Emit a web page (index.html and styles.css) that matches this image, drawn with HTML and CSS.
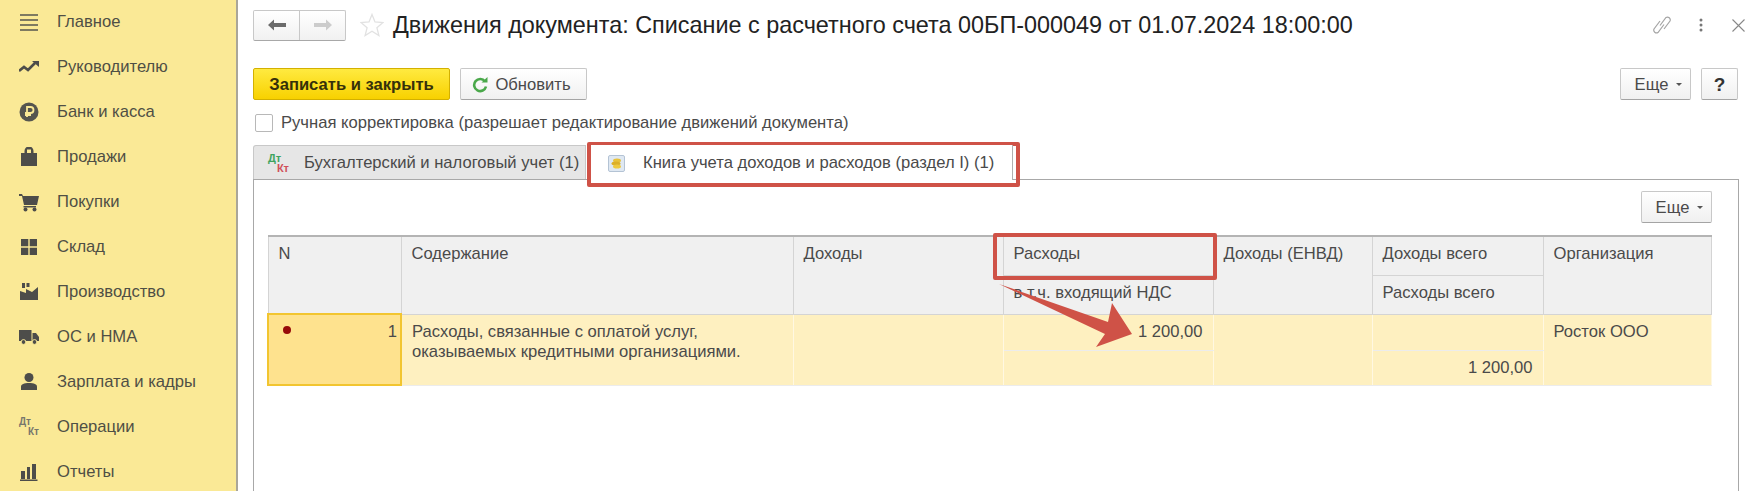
FILE: index.html
```html
<!DOCTYPE html>
<html>

<head>
    <title>Движения документа</title>
    <meta charset="utf-8">
    <link rel="stylesheet" href="styles.css">
</head>

<body>
<div class="sidebar">
    <div class="nav-item">
        <svg class="nav-icon" viewBox="0 0 20 20"><path d="M1 3h18M1 8h18M1 13h18M1 18h18" stroke="#55554f" stroke-width="1.6"/></svg>
        Главное
    </div>
    <div class="nav-item">
        <svg class="nav-icon" viewBox="0 0 20 20"><path d="M0 14l5-4 4 3 7-7" fill="none" stroke="#4d4d4a" stroke-width="2.6"/><path d="M13 4h7v6z" fill="#4d4d4a"/></svg>
        Руководителю
    </div>
    <div class="nav-item">
        <svg class="nav-icon" viewBox="0 0 20 20"><circle cx="10" cy="10" r="9.5" fill="#55554f"/><path d="M8 15V5h3.500a3 3 0 0 1 0 6H6M6 13h6" fill="none" stroke="#fae996" stroke-width="1.8"/></svg>
        Банк и касса
    </div>
    <div class="nav-item">
        <svg class="nav-icon" viewBox="0 0 20 20"><path d="M2 6h3.500V4a4.500 4.500 0 0 1 9 0v2H18v13H2z" fill="#4d4d4a"/><path d="M8 2.500h4V6H8z" fill="#fae996"/></svg>
        Продажи
    </div>
    <div class="nav-item">
        <svg class="nav-icon" viewBox="0 0 20 20"><path d="M0 2h3l1 2h16l-2 9H5L3 4H0z" fill="#4d4d4a"/><path d="M4.500 14H17v1.500H4.500z" fill="#4d4d4a"/><circle cx="6.500" cy="17.500" r="2" fill="#4d4d4a"/><circle cx="15.500" cy="17.500" r="2" fill="#4d4d4a"/></svg>
        Покупки
    </div>
    <div class="nav-item">
        <svg class="nav-icon" viewBox="0 0 20 20"><path d="M2 2h7.300v7.300H2zM10.700 2H18v7.300h-7.300zM2 10.700h7.300V18H2zM10.700 10.700H18V18h-7.300z" fill="#4d4d4a"/></svg>
        Склад
    </div>
    <div class="nav-item">
        <svg class="nav-icon" viewBox="0 0 20 20"><path d="M1 18V9l6 2V7l6 3 6-5v13z" fill="#4d4d4a"/><path d="M3 1h3v5H3zM7.500 1h3v4h-3z" fill="#4d4d4a"/></svg>
        Производство
    </div>
    <div class="nav-item">
        <svg class="nav-icon" viewBox="0 0 20 20"><path d="M0 3h12.500v11H0zM13.500 6h3.500l3 4v4h-6.500z" fill="#4d4d4a"/><circle cx="4.500" cy="15" r="2.400" fill="#4d4d4a" stroke="#fae996"/><circle cx="15.500" cy="15" r="2.400" fill="#4d4d4a" stroke="#fae996"/></svg>
        ОС и НМА
    </div>
    <div class="nav-item">
        <svg class="nav-icon" viewBox="0 0 20 20"><circle cx="10" cy="5.500" r="4.500" fill="#4d4d4a"/><path d="M2 18v-3.500c0-2 3-3.500 8-3.500s8 1.500 8 3.500V18z" fill="#4d4d4a"/></svg>
        Зарплата и кадры
    </div>
    <div class="nav-item">
        <span class="debit-credit nav-icon"><span>Дт</span><span class="credit">Кт</span></span>
        Операции
    </div>
    <div class="nav-item">
        <svg class="nav-icon" viewBox="0 0 20 20"><path d="M2 9h4v8H2zM8 5h3v12H8zM13 2h4v15h-4zM1 17.500h17.500V19H1z" fill="#4d4d4a"/></svg>
        Отчеты
    </div>
</div>

<div class="main">
    <div class="header">
        <div class="nav-buttons">
            <div class="nav-button">
                <svg width="18" height="12" viewBox="0 0 18 12"><path d="M0 6l6-5.500v3.500h12v4H6v3.500z" fill="#6b6b6b"/></svg>
            </div>
            <div class="nav-button">
                <svg width="18" height="12" viewBox="0 0 18 12"><path d="M18 6l-6-5.500v3.500H0v4h12v3.500z" fill="#cccccc"/></svg>
            </div>
        </div>
        <svg class="star" width="24" height="24" viewBox="0 0 24 24"><path d="M12 1.500l3 7.500 8 .6-6.100 5.100 2 7.800L12 18.200l-6.900 4.300 2-7.800L1 9.600 9 9z" fill="none" stroke="#e2e2e2" stroke-width="1.300"/></svg>
        <div class="title">Движения документа: Списание с расчетного счета 00БП-000049 от 01.07.2024 18:00:00</div>
        <div class="header-icons">
            <svg class="icon-link" width="18" height="22" viewBox="0 0 18 22"><path d="M7 11.500l6-8a2.800 2.800 0 0 1 4 3.500l-6 8M11 10.500l-6 8a2.800 2.800 0 0 1-4-3.500l6-8" fill="none" stroke="#a4a4a4" stroke-width="1.200"/></svg>
            <svg class="icon-dots" width="4" height="14" viewBox="0 0 4 14"><circle cx="2" cy="2" r="1.500" fill="#777"/><circle cx="2" cy="7" r="1.500" fill="#777"/><circle cx="2" cy="12" r="1.500" fill="#777"/></svg>
            <svg class="icon-close" width="13" height="13" viewBox="0 0 13 13"><path d="M.5.500l12 12M12.500.500l-12 12" stroke="#888" stroke-width="1.100"/></svg>
        </div>
    </div>

    <div class="toolbar">
        <div class="button button-primary">Записать и закрыть</div>
        <div class="button button-refresh">
            <svg width="16" height="16" viewBox="0 0 16 16"><path d="M13 4.500A6 6 0 1 0 14 9.500" fill="none" stroke="#4aa84a" stroke-width="2.600"/><path d="M9.500 5.500h6v-5.500z" fill="#4aa84a"/></svg>
            Обновить
        </div>
        <div class="button button-more toolbar-more">Еще <span class="caret"></span></div>
        <div class="button button-help">?</div>
    </div>

    <div class="check-row">
        <div class="checkbox"></div>
        Ручная корректировка (разрешает редактирование движений документа)
    </div>

    <div class="tabs">
        <div class="tab tab-off">
            <span class="debit-credit tab-dk"><span>Дт</span><span class="credit">Кт</span></span>
            Бухгалтерский и налоговый учет (1)
        </div>
        <div class="tab tab-on">
            <svg width="17" height="17" viewBox="0 0 17 17"><rect x=".5" y=".5" width="16" height="16" rx="1.500" fill="#dfe8f2" stroke="#b4c3d4"/><ellipse cx="9" cy="5.500" rx="4" ry="2" fill="#e8c23a"/><ellipse cx="8" cy="8.500" rx="4.500" ry="2" fill="#dcaf28"/><ellipse cx="9" cy="11.500" rx="4" ry="2" fill="#eec93f"/></svg>
            Книга учета доходов и расходов (раздел I) (1)
        </div>
    </div>

    <div class="panel">
        <div class="panel-bar">
            <div class="button button-more">Еще <span class="caret"></span></div>
        </div>
        <table class="grid">
            <colgroup>
                <col class="col-n"><col class="col-text"><col class="col-inc"><col class="col-exp">
                <col class="col-envd"><col class="col-total"><col class="col-org">
            </colgroup>
            <tr class="head-top">
                <th rowspan="2">N</th>
                <th rowspan="2">Содержание</th>
                <th rowspan="2">Доходы</th>
                <th>Расходы</th>
                <th rowspan="2">Доходы (ЕНВД)</th>
                <th>Доходы всего</th>
                <th rowspan="2">Организация</th>
            </tr>
            <tr class="head-bottom">
                <th>в т.ч. входящий НДС</th>
                <th>Расходы всего</th>
            </tr>
            <tr class="row-top">
                <td rowspan="2" class="cell-n"><span class="dot"></span>1</td>
                <td rowspan="2">Расходы, связанные с оплатой услуг,<br>оказываемых кредитными организациями.</td>
                <td rowspan="2"></td>
                <td class="num">1 200,00</td>
                <td rowspan="2"></td>
                <td></td>
                <td rowspan="2">Росток ООО</td>
            </tr>
            <tr class="row-bottom">
                <td></td>
                <td class="num">1 200,00</td>
            </tr>
        </table>
    </div>
</div>

<!-- Annotations drawn over the screenshot -->
<div class="mark mark-tab"></div>
<div class="mark mark-head"></div>
<svg class="arrow" width="145" height="75" viewBox="0 0 145 75"><path d="M4 4L113 42 117 23 137 54 101 67 110 54z" fill="#cf5247"/></svg>
</body>

</html>
```
FILE: styles.css
```css
html, body {
    margin: 0;
    height: 491px;
    overflow: hidden;
}

body {
    display: flex;
    position: relative;
    background-color: white;
    font-family: "Liberation Sans", Arial, sans-serif;
    font-size: 16.6px;
    color: #4a4a4a;
}

/* Sidebar */
.sidebar {
    flex: none;
    width: 236px;
    margin-top: -1px;
    background-color: #fae996;
    border-right: 2px solid #a9a69a;
}

.nav-item {
    display: flex;
    align-items: center;
    gap: 18px;
    height: 45px;
    padding-left: 19px;
    color: #4f4f45;
}

.nav-icon {
    flex: none;
    width: 20px;
    height: 20px;
}

.debit-credit {
    display: flex;
    flex-direction: column;
    font-size: 10px;
    font-weight: bold;
    line-height: 10px;
    color: #77776c;
}

.debit-credit .credit {
    align-self: flex-end;
}

/* Main part */
.main {
    flex: 1;
    min-width: 0;
    padding: 0 14px 0 15px;
}

.header {
    display: flex;
    align-items: center;
    height: 30px;
    margin-top: 10px;
}

.nav-buttons {
    display: flex;
    width: 91px;
    height: 29px;
    border: 1px solid #c8c8c8;
    border-bottom-color: #a8a8a8;
    border-radius: 2px;
    background: linear-gradient(#ffffff, #f1f1f1);
}

.nav-button {
    flex: 1;
    display: flex;
    align-items: center;
    justify-content: center;
}

.nav-button + .nav-button {
    border-left: 1px solid #c8c8c8;
}

.star {
    margin-left: 14px;
}

.title {
    margin-left: 9px;
    font-size: 23.4px;
    color: #222222;
    white-space: nowrap;
}

.header-icons {
    display: flex;
    align-items: center;
    margin-left: auto;
    margin-right: -6px;
}

.icon-dots {
    margin-left: 28px;
}

.icon-close {
    margin-left: 29px;
}

.toolbar {
    display: flex;
    gap: 10px;
    margin-top: 28px;
}

.button {
    display: flex;
    align-items: center;
    justify-content: center;
    gap: 7px;
    box-sizing: border-box;
    height: 32px;
    padding-top: 1px;
    border: 1px solid #c8c8c8;
    border-bottom-color: #a4a4a4;
    border-radius: 2px;
    background: linear-gradient(#ffffff, #f0f0f0);
}

.button-primary {
    width: 197px;
    border-color: #d3b000;
    background: linear-gradient(#ffea40, #f8d100);
    color: #35300a;
    font-weight: bold;
}

.button-refresh {
    width: 127px;
    padding-right: 4px;
}

.button-more {
    width: 71px;
    gap: 8px;
    padding-left: 6px;
}

.toolbar-more {
    margin-left: auto;
}

.button-help {
    width: 37px;
    margin-right: 1px;
    font-size: 19px;
    font-weight: bold;
    color: #333333;
}

.caret {
    width: 0;
    height: 0;
    border-left: 3px solid transparent;
    border-right: 3px solid transparent;
    border-top: 3px solid #555555;
}

.check-row {
    display: flex;
    align-items: center;
    gap: 8px;
    height: 18px;
    margin: 14px 0 0 2px;
}

.checkbox {
    box-sizing: border-box;
    width: 18px;
    height: 18px;
    border: 1px solid #b8b8b8;
    border-radius: 2px;
}

/* Tabs */
.tabs {
    display: flex;
    height: 34px;
    margin-top: 13px;
}

.tab {
    display: flex;
    align-items: center;
    box-sizing: border-box;
    padding-top: 1px;
}

.tab-off {
    width: 333px;
    gap: 15px;
    padding-left: 14px;
    border: 1px solid #c8c8c8;
    border-bottom: none;
    border-radius: 3px 0 0 0;
    background-color: #e6e6e6;
}

.tab-dk {
    width: 21px;
    color: #3fa45e;
    font-size: 11px;
}

.tab-dk .credit {
    color: #d0505a;
}

.tab-on {
    width: 422px;
    height: 35px;
    margin-left: 5px;
    gap: 18px;
    padding-left: 17px;
    border-right: 1px solid #b0b0b0;
    background-color: white;
    position: relative;
    z-index: 1;
}

.panel {
    box-sizing: border-box;
    height: 320px;
    padding: 0 26px 0 13px;
    border: 1px solid #a8a8a8;
}

.panel-bar {
    display: flex;
    justify-content: flex-end;
    margin-top: 11px;
    height: 44px;
}

/* Table */
.grid {
    width: 1443px;
    table-layout: fixed;
    border-collapse: collapse;
    border-top: 2px solid #b4b4b4;
    border-left: 1px solid #b4b4b4;
    border-right: 1px solid #b4b4b4;
}

.col-n { width: 133px; }
.col-text { width: 392px; }
.col-inc { width: 210px; }
.col-exp { width: 210px; }
.col-envd { width: 159px; }
.col-total { width: 171px; }
.col-org { width: 168px; }

.grid th, .grid td {
    box-sizing: border-box;
    padding: 7px 10px 0;
    vertical-align: top;
    text-align: left;
    font-weight: normal;
    line-height: 20px;
    color: #4a4a4a;
}

.grid th {
    background-color: #f0f0f0;
    border: 1px solid #d4d4d4;
}

.grid td {
    background-color: #fef0c0;
    border: 1px solid #fff8e2;
    border-bottom-color: #ececec;
}

.head-top { height: 39px; }
.head-bottom { height: 39px; }
.row-top { height: 36px; }
.row-bottom { height: 35px; }

.grid .num {
    text-align: right;
}

.grid .cell-n {
    position: relative;
    text-align: right;
    background-color: #fee28e;
    border: 2px solid #f2c530;
    padding-right: 3px;
}

.dot {
    position: absolute;
    left: 14px;
    top: 11px;
    width: 8px;
    height: 8px;
    border-radius: 50%;
    background-color: #960a0a;
}

/* Red marks */
.mark {
    position: absolute;
    box-sizing: border-box;
    border: 4px solid #cf5247;
    border-radius: 2px;
}

.mark-tab {
    left: 587px;
    top: 142px;
    width: 433px;
    height: 45px;
}

.mark-head {
    left: 993px;
    top: 233px;
    width: 224px;
    height: 47px;
}

.arrow {
    position: absolute;
    left: 995px;
    top: 280px;
}
```
